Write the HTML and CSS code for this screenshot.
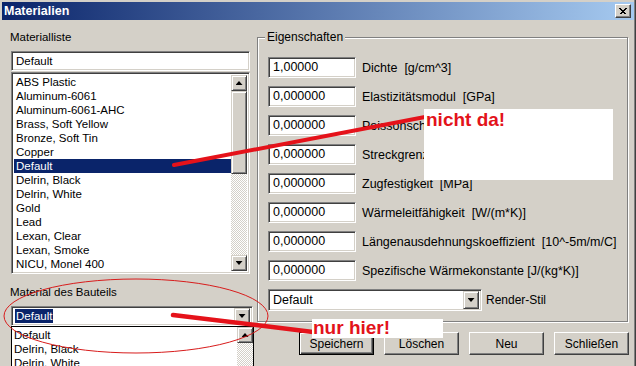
FILE: index.html
```html
<!DOCTYPE html>
<html>
<head>
<meta charset="utf-8">
<title>Materialien</title>
<link rel="stylesheet" href="styles.css">
</head>
<body>
<div class="window">
  <div class="titlebar">
    <span class="title">Materialien</span>
    <span class="close-btn"><svg width="8" height="7" viewBox="0 0 8 7"><path d="M0.5 0.5L6.5 6.5M1.5 0.5L7.5 6.5M6.5 0.5L0.5 6.5M7.5 0.5L1.5 6.5" stroke="#000" stroke-width="1"/></svg></span>
  </div>
  <div class="client">
    <div class="left">
      <div class="label">Materialliste</div>
      <div class="textbox sunken">Default</div>
      <div class="listbox sunken">
        <div class="items">
          <div class="item">ABS Plastic</div>
          <div class="item">Aluminum-6061</div>
          <div class="item">Aluminum-6061-AHC</div>
          <div class="item">Brass, Soft Yellow</div>
          <div class="item">Bronze, Soft Tin</div>
          <div class="item">Copper</div>
          <div class="item selected">Default</div>
          <div class="item">Delrin, Black</div>
          <div class="item">Delrin, White</div>
          <div class="item">Gold</div>
          <div class="item">Lead</div>
          <div class="item">Lexan, Clear</div>
          <div class="item">Lexan, Smoke</div>
          <div class="item">NICU, Monel 400</div>
          <div class="item">Nickel</div>
        </div>
        <div class="vscroll">
          <div class="sbtn up"></div>
          <div class="thumb"></div>
          <div class="track"></div>
          <div class="sbtn down"></div>
        </div>
      </div>
      <div class="label label2">Material des Bauteils</div>
      <div class="combo sunken">
        <span class="combo-text"><span class="sel">Default</span></span>
        <span class="sbtn down"></span>
      </div>
    </div>
    <div class="right">
      <div class="group">
        <div class="legend">Eigenschaften</div>
        <div class="rows">
          <div class="row"><div class="field sunken">1,00000</div><span class="flabel">Dichte  [g/cm^3]</span></div>
          <div class="row"><div class="field sunken">0,000000</div><span class="flabel">Elastizitätsmodul  [GPa]</span></div>
          <div class="row"><div class="field sunken">0,000000</div><span class="flabel">Poissonsche Zahl</span></div>
          <div class="row"><div class="field sunken">0,000000</div><span class="flabel">Streckgrenze  [MPa]</span></div>
          <div class="row"><div class="field sunken">0,000000</div><span class="flabel">Zugfestigkeit  [MPa]</span></div>
          <div class="row"><div class="field sunken">0,000000</div><span class="flabel">Wärmeleitfähigkeit  [W/(m*K)]</span></div>
          <div class="row"><div class="field sunken">0,000000</div><span class="flabel">Längenausdehnungskoeffizient  [10^-5m/m/C]</span></div>
          <div class="row"><div class="field sunken">0,000000</div><span class="flabel">Spezifische Wärmekonstante [J/(kg*K)]</span></div>
          <div class="row row-render">
            <div class="rcombo sunken"><span class="rcombo-text">Default</span><span class="sbtn down tall"></span></div>
            <span class="rlabel">Render-Stil</span>
          </div>
        </div>
      </div>
      <div class="buttons">
        <div class="btn default">Speichern</div>
        <div class="btn">Löschen</div>
        <div class="btn">Neu</div>
        <div class="btn">Schließen</div>
      </div>
    </div>
  </div>

  <div class="popup">
    <div class="items">
      <div class="item">Default</div>
      <div class="item">Delrin, Black</div>
      <div class="item">Delrin, White</div>
    </div>
    <div class="vscroll">
      <div class="sbtn up"></div>
      <div class="track"></div>
    </div>
  </div>

  <svg class="annot" width="636" height="366" viewBox="0 0 636 366">
    <ellipse cx="136" cy="316" rx="132" ry="37" fill="none" stroke="#d81c1c" stroke-width="1"/>
    <line x1="174" y1="165" x2="425" y2="117" stroke="#e5121a" stroke-width="4" stroke-linecap="round"/>
    <line x1="173" y1="315" x2="313" y2="332" stroke="#e5121a" stroke-width="4.5" stroke-linecap="round"/>
  </svg>
  <div class="note note1">nicht da!</div>
  <div class="note note2">nur hier!</div>
</div>
</body>
</html>
```
FILE: styles.css
```css
* { box-sizing: border-box; margin: 0; padding: 0; }
html, body { width: 636px; height: 366px; overflow: hidden; }
body {
  background: #d4d0c8;
  font-family: "Liberation Sans", Arial, sans-serif;
  font-size: 12px;
  color: #000;
}
.window {
  position: relative;
  width: 636px;
  height: 366px;
  background: #d4d0c8;
  padding: 2px 1px 0 2px;
  border-right: 1px solid #404040;
  box-shadow: inset -1px 0 #808080;
  overflow: hidden;
}
.titlebar {
  height: 18px;
  background: linear-gradient(to right, #0a246a, #a6caf0);
  display: flex;
  align-items: center;
  justify-content: space-between;
  padding: 0 3px 0 2px;
}
.title {
  color: #fff;
  font-weight: bold;
  font-size: 12.5px;
  line-height: 14px;
}
.close-btn {
  width: 16px;
  height: 14px;
  background: #d4d0c8;
  border: 1px solid;
  border-color: #fff #404040 #404040 #fff;
  box-shadow: inset -1px -1px #808080;
  display: flex;
  align-items: center;
  justify-content: center;
}
.close-btn svg { display: block; shape-rendering: crispEdges; }

.sunken {
  border: 1px solid;
  border-color: #808080 #fff #fff #808080;
  box-shadow: inset 1px 1px #404040, inset -1px -1px #d4d0c8;
  background: #fff;
}

.client {
  display: flex;
  padding: 10px 0 0 9px;
}
.left {
  width: 242px;
  display: flex;
  flex-direction: column;
  font-size: 11.5px;
}
.label {
  height: 14px;
  line-height: 14px;
  margin-left: -1px;
}
.textbox {
  margin-top: 7px;
  width: 239px;
  height: 20px;
  line-height: 18px;
  padding-left: 4px;
}
.listbox {
  margin-top: 1px;
  width: 239px;
  height: 202px;
  padding: 2px;
  display: flex;
  overflow: hidden;
}
.items {
  flex: 1;
  overflow: hidden;
}
.item {
  height: 14px;
  line-height: 14px;
  padding-left: 2px;
  white-space: nowrap;
}
.item.selected {
  background: #0a246a;
  color: #fff;
}
.vscroll {
  width: 16px;
  display: flex;
  flex-direction: column;
}
.sbtn {
  width: 16px;
  height: 16px;
  flex: none;
  background: #d4d0c8;
  border: 1px solid;
  border-color: #d4d0c8 #404040 #404040 #d4d0c8;
  box-shadow: inset 1px 1px #fff, inset -1px -1px #808080;
  display: flex;
  align-items: center;
  justify-content: center;
}
.sbtn::after {
  content: "";
  width: 7px;
  height: 4px;
  background: #000;
}
.sbtn.up::after { clip-path: polygon(50% 0, 100% 100%, 0 100%); }
.sbtn.down::after { clip-path: polygon(0 0, 100% 0, 50% 100%); }
.sbtn.tall { height: 18px; }
.thumb {
  height: 83px;
  flex: none;
  background: #d4d0c8;
  border: 1px solid;
  border-color: #d4d0c8 #404040 #404040 #d4d0c8;
  box-shadow: inset 1px 1px #fff, inset -1px -1px #808080;
}
.track {
  flex: 1;
  background: repeating-conic-gradient(#d4d0c8 0 25%, #fff 0 50%) 0 0 / 2px 2px;
}
.label2 { margin-top: 11px; }
.combo {
  margin-top: 7px;
  width: 242px;
  height: 20px;
  padding: 2px;
  display: flex;
  align-items: center;
}
.combo-text { flex: 1; padding-left: 1px; }
.sel {
  background: #0a246a;
  color: #fff;
  padding: 0 1px;
  line-height: 14px;
  display: inline-block;
}

.right {
  margin-left: 4px;
  margin-top: 7px;
  width: 372px;
}
.group {
  width: 371px;
  border: 1px solid #808080;
  box-shadow: inset 1px 1px #fff, 1px 1px #fff;
  padding: 0 0 10px 10px;
}
.legend {
  display: table;
  margin: -8px 0 0 -3px;
  padding: 0 2px;
  background: #d4d0c8;
  line-height: 14px;
  height: 14px;
}
.rows {
  margin-top: 13px;
  display: flex;
  flex-direction: column;
  gap: 8px;
}
.row {
  display: flex;
  align-items: center;
  height: 21px;
}
.field {
  width: 88px;
  height: 21px;
  line-height: 19px;
  padding-left: 4px;
  flex: none;
  font-size: 12.5px;
}
.flabel {
  margin-left: 6px;
  white-space: pre;
  font-size: 12.5px;
}
.row-render { height: 22px; }
.rcombo {
  width: 214px;
  height: 22px;
  padding: 2px;
  display: flex;
  align-items: center;
  flex: none;
}
.rcombo-text { flex: 1; padding-left: 2px; font-size: 12.5px; }
.rlabel { margin-left: 4px; }

.buttons {
  margin-top: 10px;
  display: flex;
  justify-content: flex-end;
  gap: 10px;
}
.btn {
  width: 75px;
  height: 23px;
  border: 1px solid;
  border-color: #fff #404040 #404040 #fff;
  box-shadow: inset -1px -1px #808080;
  display: flex;
  align-items: center;
  justify-content: center;
}
.btn.default {
  border-color: #000;
  box-shadow: inset 1px 1px #fff, inset -1px -1px #404040, inset -2px -2px #808080;
}

.popup {
  position: absolute;
  left: 11px;
  top: 326px;
  width: 243px;
  height: 60px;
  border: 1px solid #000;
  background: #fff;
  display: flex;
  font-size: 11.5px;
  padding-top: 1px;
}
.popup .vscroll { margin-top: -1px; }

.annot {
  position: absolute;
  left: 0;
  top: 0;
  pointer-events: none;
}
.note {
  position: absolute;
  background: #fff;
  color: #e3131b;
  font-weight: bold;
  font-size: 19px;
  white-space: nowrap;
}
.note1 {
  left: 424px;
  top: 109px;
  width: 189px;
  height: 71px;
  line-height: 20px;
  padding: 1px 0 0 2px;
}
.note2 {
  left: 312px;
  top: 319px;
  width: 131px;
  height: 19px;
  line-height: 18px;
  padding-left: 1px;
}
```
